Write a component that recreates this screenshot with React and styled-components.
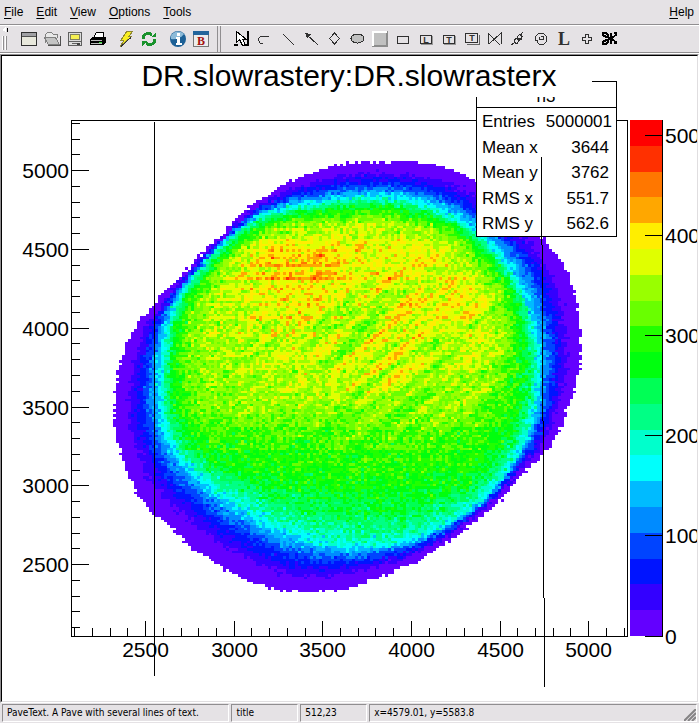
import React from "react";
import styled, { createGlobalStyle } from "styled-components";

const GlobalStyle = createGlobalStyle`
  body {
    margin: 0;
    background: #e5e2e5;
    color: #000;
    font-family: "Liberation Sans", Arial, sans-serif;
  }
`;

const Window = styled.div`
  display: flex;
  flex-direction: column;
`;

const MenuBar = styled.nav`
  display: flex;
  align-items: center;
  gap: 13px;
  height: 24px;
  padding: 0 5px 0 4px;
  border-bottom: 1px solid #908e90;
`;

const MenuButton = styled.button`
  padding: 0;
  border: 0;
  background: none;
  color: inherit;
  font: 12px/16px "Liberation Sans", Arial, sans-serif;
  margin-left: ${({ $end }) => ($end ? "auto" : "0")};
`;

const Underlined = styled.span`
  text-decoration: underline;
  text-underline-offset: 2px;
`;

const ToolBar = styled.div`
  display: flex;
  align-items: center;
  height: 26px;
  padding-left: 2px;
  border-top: 1px solid #fff;
  border-bottom: 1px solid #908e90;
  box-shadow: 0 1px 0 #fff;
  margin-bottom: 1px;
`;

const ToolGroup = styled.div`
  display: flex;
  margin-right: ${({ $gap }) => $gap || 0}px;
`;

const ToolButton = styled.button`
  display: flex;
  align-items: center;
  justify-content: center;
  width: 23px;
  height: 24px;
  padding: 0;
  border: 0;
  background: none;
`;

const Grip = styled.svg`
  width: 15px;
  height: 24px;
`;

const Divider = styled.div`
  width: 2px;
  height: 26px;
  border-left: 1px solid #908e90;
  border-right: 1px solid #908e90;
  margin-right: 9px;
`;

const CanvasFrame = styled.main`
  border: 1px solid;
  border-color: #908e90 #fff #fff #908e90;
`;

const Canvas = styled.div`
  border: 1px solid;
  border-color: #000 #e0dee0 #e0dee0 #000;
  background: #fff;
`;

const Plot = styled.svg`
  display: block;
  width: 100%;
  height: auto;
  font-family: "Liberation Sans", Arial, sans-serif;
`;

const StatusBar = styled.footer`
  display: grid;
  grid-template-columns: 34fr 10fr 10fr 49fr;
  gap: 2px;
  padding: 1px 2px;
`;

const StatusPane = styled.div`
  display: flex;
  align-items: center;
  justify-content: space-between;
  height: 16px;
  padding-left: 4px;
  border: 1px solid;
  border-color: #908e90 #fff #fff #908e90;
  font: 10px/16px "DejaVu Sans Condensed", "DejaVu Sans", sans-serif;
  white-space: nowrap;
`;

const SizeGrip = styled.svg`
  width: 12px;
  height: 12px;
  align-self: flex-end;
`;

/* ---------- toolbar icons, all on an 18x18 grid ---------- */

const ink = "#303030";

const icons = {
  "New canvas": (
    <g>
      <path d="M1.5 2.5h15v13h-15z" fill="#e8e8dc" stroke={ink} />
      <path d="M2 3h14v3H2z" fill="#a0a0a4" />
      <path d="M2 6.5h14" stroke="#505050" />
    </g>
  ),
  Open: (
    <g>
      <path d="M2.5 12.5V4.5l2-2h4l2 2h4v3" fill="#e8e8e8" stroke="#808080" />
      <path d="M1.5 7.5h11l4 7h-11z" fill="#c4c4c4" stroke="#808080" />
      <path d="M5 15.5h12V6" fill="none" stroke="#505050" />
    </g>
  ),
  Save: (
    <g>
      <path d="M2.5 2.5h13v13h-13z" fill="#dcdcdc" stroke="#606060" />
      <path d="M4.500 4.500h9v5h-9z" fill="#f6f052" stroke="#808060" />
      <path d="M3 11.500h12M6 13.500h5" stroke="#606060" />
      <path d="M11 13h3v2h-3z" fill="#404040" />
    </g>
  ),
  Print: (
    <g>
      <path d="M5.500 8V5.500l2-3h7V8z" fill="#fff" stroke="#000" />
      <path d="M1 9l3-2h13v5l-3 3H1z" fill="#000" />
      <path d="M2 10h11v1H2zM2 13h11v1H2z" fill="#b8b8b8" />
      <path d="M10 12h3v1h-3z" fill="#33dd33" />
    </g>
  ),
  Interrupt: (
    <g>
      <path d="M10 1h6l-4 5h3L3 17l4-7H4z" fill="#f8ee20" stroke="#8f8832" />
      <path d="M14 7.500L4 16.500" stroke="#333" />
    </g>
  ),
  Refresh: (
    <g fill="none" stroke="#19922c" strokeWidth="3">
      <path d="M3 9C3 4 8 2 12 5" />
      <path d="M15 9c0 5-5 7-9 4" />
      <path d="M11 7h5V2zM7 11H2v5z" fill="#19922c" stroke="none" />
    </g>
  ),
  Inspect: (
    <g shapeRendering="auto">
      <circle cx="9" cy="9" r="8" fill="#1d6096" />
      <path d="M2 6a8 8 0 0 1 13-2c-3 4-8 6-13 5z" fill="#8dbbd9" />
      <path d="M8 3h3v3H8zM7 7h4v6h2v2H7v-2h1V9H7z" fill="#fff" />
    </g>
  ),
  Browser: (
    <g>
      <path d="M1.500 1.500h15v15h-15z" fill="#ededed" stroke="#777" />
      <path d="M1 1h16v4H1z" fill="#24659b" />
      <text x="9" y="15" fontSize="12" fontWeight="bold" textAnchor="middle" fill="#a31212"
        fontFamily="Liberation Serif, serif">B</text>
    </g>
  ),
  Pointer: (
    <g>
      <path d="M1 15h4M10 15h5V1" fill="none" stroke="#000" strokeWidth="2" />
      <path d="M3.500 1.500v11l3-3 3 6 3-1-3-5h4z" fill="#fff" stroke="#000" />
    </g>
  ),
  Arc: <path d="M7 13.500H4.500l-2-3v-2l3-2.500h5l2 1" fill="none" stroke={ink} />,
  Line: <path d="M4 4l11 11" stroke={ink} />,
  Arrow: (
    <g>
      <path d="M4 4l12 11" stroke={ink} />
      <path d="M3 3l6 1-4 4z" fill={ink} />
    </g>
  ),
  Diamond: <path d="M9.500 3l5 5.500-5 5.500-5-5.500z" fill="#e5e2e5" stroke={ink} />,
  Ellipse: <ellipse cx="9.500" cy="8.500" rx="6.500" ry="4.500" fill="#c0c0c0" stroke={ink} />,
  Pad: (
    <g>
      <path d="M1 1h16v16H1z" fill="#8c8c8c" />
      <path d="M1 1h15v2H3v13H1z" fill="#fff" />
      <path d="M3 3h12v12H3z" fill="#c0c0c0" />
    </g>
  ),
  Pave: <path d="M3.500 6.500h11v7h-11z" fill="none" stroke={ink} />,
  "Pave label": (
    <g>
      <path d="M4 14.500h11.500V6" fill="none" stroke="#999" />
      <path d="M3.500 5.500h11v8h-11z" fill="none" stroke={ink} />
      <text x="9" y="13" fontSize="9" fontWeight="bold" textAnchor="middle" fill={ink}>L</text>
    </g>
  ),
  "Pave text": (
    <g>
      <path d="M4 14.500h11.500V6" fill="none" stroke="#999" />
      <path d="M3.500 5.500h11v8h-11z" fill="none" stroke={ink} />
      <text x="9" y="13" fontSize="9" fontWeight="bold" textAnchor="middle" fill={ink}>T</text>
    </g>
  ),
  "Paves text": (
    <g>
      <path d="M4 14.500h12.500V5M14.500 4v8.500H5" fill="none" stroke="#666" />
      <path d="M2.500 3.500h12v9h-12z" fill="#e5e2e5" stroke={ink} />
      <text x="9" y="11" fontSize="9" fontWeight="bold" textAnchor="middle" fill={ink}>T</text>
    </g>
  ),
  Graph: <path d="M2.500 14V3.500L14 15M15.500 2v12M15 3L3 14" fill="none" stroke={ink} />,
  "Curly line": (
    <path d="M2 15l3-2V9.500l3-1 2 2-2 3-3-1M8 10V6.500l3-2 2 2-1 3-3-1M11 6l3-4M10 10l3-2" fill="none" stroke={ink} />
  ),
  "Curly arc": (
    <path d="M3.500 9.500V6.500l3-3h5l3 3v5l-3 3h-4l-2-2v-2h-3M8.500 6.500h3v3h-4v-3" fill="none" stroke={ink} />
  ),
  Latex: (
    <text x="9" y="15" fontSize="18" fontWeight="bold" textAnchor="middle" fill={ink}
      fontFamily="Liberation Serif, serif">L</text>
  ),
  Marker: <path d="M7.500 4.500h3v3h3v3h-3v3h-3v-3h-3v-3h3z" fill="none" stroke={ink} />,
  "Cutting pad": (
    <g fill="none" stroke="#000" strokeWidth="2">
      <path d="M2 3h3l2 2v2L5 7 2 5zM2 14h3l2-2v-2l-2 0-3 2z" />
      <path d="M6 7l3 1h2l5-4M6 10l3-1h2l5 4M10 3v4M10 10v4M13 3h3M13 13h3" />
    </g>
  ),
};

const toolGroups = [
  { gap: 5, tools: ["New canvas", "Open", "Save", "Print"] },
  { gap: 6, tools: ["Interrupt", "Refresh"] },
  { gap: 5, tools: ["Inspect", "Browser"] },
];

const drawTools = [
  "Pointer", "Arc", "Line", "Arrow", "Diamond", "Ellipse", "Pad", "Pave", "Pave label",
  "Pave text", "Paves text", "Graph", "Curly line", "Curly arc", "Latex", "Marker", "Cutting pad",
];

function Tool({ name }) {
  return (
    <ToolButton type="button" aria-label={name}>
      <svg width="18" height="18" viewBox="0 0 18 18" shapeRendering="crispEdges" aria-hidden="true">
        {icons[name]}
      </svg>
    </ToolButton>
  );
}

/* ---------- histogram ---------- */

const BINS_X = 186;
const BINS_Y = 200;
const LEVELS = 20;
const frame = { left: 71, top: 120, right: 627, bottom: 636 };
const center = [350, 378];

// outer edge of the distribution
const outerEdge = [
  [370, 162], [400, 162], [425, 164], [455, 170], [476, 181], [510, 205], [545, 240], [562, 262],
  [574, 290], [581, 335], [578, 380], [568, 410], [556, 438], [545, 452], [520, 477], [490, 509],
  [465, 529], [440, 547], [410, 564], [380, 577], [350, 587], [320, 592], [290, 592], [260, 585],
  [238, 576], [215, 562], [190, 547], [170, 528], [154, 514], [140, 498], [130, 480], [122, 455],
  [115, 430], [114, 405], [118, 375], [126, 345], [140, 322], [155, 304], [170, 286], [185, 272],
  [200, 254], [220, 237], [245, 211], [265, 197], [285, 183], [310, 174], [340, 165],
];

// cyan ridge, where the counts start to level off
const innerEdge = [
  [375, 197], [400, 199], [433, 208], [455, 217], [477, 233], [495, 251], [511, 270], [525, 296],
  [532, 322], [537, 348], [538, 377], [536, 400], [531, 422], [520, 449], [507, 472], [489, 493],
  [467, 511], [450, 522], [432, 532], [410, 540], [380, 545], [345, 545], [310, 540], [280, 529],
  [250, 512], [222, 495], [198, 476], [180, 456], [168, 436], [161, 405], [161, 378], [163, 350],
  [167, 328], [173, 307], [182, 291], [196, 273], [211, 256], [226, 242], [241, 229], [256, 218],
  [280, 209], [310, 204], [345, 199],
];

function radialProfile(points) {
  const steps = 720;
  const polar = points
    .map(([x, y]) => [
      Math.atan2(y - center[1], x - center[0]),
      Math.hypot(x - center[0], y - center[1]),
    ])
    .sort((a, b) => a[0] - b[0]);
  const last = polar[polar.length - 1];
  const ring = [[last[0] - 2 * Math.PI, last[1]], ...polar, [polar[0][0] + 2 * Math.PI, polar[0][1]]];
  const table = [];
  for (let i = 0; i <= steps; i++) {
    const angle = -Math.PI + (i / steps) * 2 * Math.PI;
    let k = 1;
    while (k < ring.length - 1 && ring[k][0] < angle) k++;
    const [a0, r0] = ring[k - 1];
    const [a1, r1] = ring[k];
    table.push(r0 + ((r1 - r0) * (angle - a0)) / (a1 - a0));
  }
  return (angle) => table[Math.round(((angle + Math.PI) / (2 * Math.PI)) * steps)];
}

function hash(x, y) {
  let h = Math.imul(x, 374761393) + Math.imul(y, 668265263);
  h = Math.imul(h ^ (h >>> 13), 1274126177);
  return ((h ^ (h >>> 16)) >>> 0) / 4294967296;
}

function smoothNoise(x, y) {
  const ix = Math.floor(x);
  const iy = Math.floor(y);
  const fx = x - ix;
  const fy = y - iy;
  const top = hash(ix, iy) * (1 - fx) + hash(ix + 1, iy) * fx;
  const low = hash(ix, iy + 1) * (1 - fx) + hash(ix + 1, iy + 1) * fx;
  return top * (1 - fy) + low * fy - 0.5;
}

const bump = (x, y, cx, cy, rx, ry) => Math.exp(-(((x - cx) / rx) ** 2) - ((y - cy) / ry) ** 2);

// mean level on the plateau, from the top of the pad downwards
const plateau = [[200, 13.8], [235, 14.8], [290, 14.8], [340, 14], [400, 13], [450, 11.7], [500, 10.5], [545, 9.2]];

function plateauLevel(x, y) {
  let k = 1;
  while (k < plateau.length - 1 && plateau[k][0] < y) k++;
  const [y0, v0] = plateau[k - 1];
  const [y1, v1] = plateau[k];
  const base = v0 + ((v1 - v0) * (y - y0)) / (y1 - y0);
  return base + bump(x, y, 280, 262, 75, 30) * 1.1 + bump(x, y, 420, 340, 80, 60) * 0.4
    - bump(x, y, 525, 320, 40, 100) * 1.4 - bump(x, y, 240, 500, 60, 40) * 1;
}

function binLevels() {
  const outer = radialProfile(outerEdge);
  const inner = radialProfile(innerEdge);
  const rows = [];
  for (let j = 0; j < BINS_Y; j++) {
    const row = [];
    for (let i = 0; i < BINS_X; i++) {
      const x = frame.left + ((i + 0.5) * (frame.right - frame.left)) / BINS_X;
      const y = frame.top + ((j + 0.5) * (frame.bottom - frame.top)) / BINS_Y;
      const angle = Math.atan2(y - center[1], x - center[0]);
      const r = Math.hypot(x - center[0], y - center[1]);
      const gauss = hash(i, j) + hash(i + 500, j) + hash(i, j + 500) - 1.5;
      const rOut = outer(angle);
      const rIn = inner(angle);
      const t = (rOut - r + gauss * 2) / (rOut - rIn);
      let level = -1;
      if (t > 0 && t <= 1) {
        level = 6.6 * t ** 1.7 + gauss * 0.8 * t;
        level = Math.max(0, level);
      } else if (t > 1) {
        const depth = rIn - r;
        const rise = 1 - Math.exp(-Math.max(0, depth) / 14);
        // streaks run up and to the right
        const along = (x * 0.79 - y * 0.61) / 45;
        const across = (x * 0.61 + y * 0.79) / 5;
        const streak = smoothNoise(along, across) * 5 * bump(x, y, 390, 345, 160, 95);
        const stripes = (hash(7, j) - 0.5) * 2 * bump(x, y, 280, 275, 90, 60);
        const comb = (hash(7, j) - 0.5 + (hash(i, 11) - 0.5) * 0.7) * 0.7;
        level = 6.6 + (plateauLevel(x, y) - 6.6) * rise + (streak + stripes + comb) * rise + gauss * 1.5;
        level = Math.max(5, level);
      }
      row.push(level < 0 ? -1 : Math.min(LEVELS - 1, Math.floor(level)));
    }
    rows.push(row);
  }
  return rows;
}

function levelPaths(rows) {
  const paths = Array.from({ length: LEVELS }, () => "");
  const edgeX = (i) => Math.round(frame.left + (i * (frame.right - frame.left)) / BINS_X);
  const edgeY = (j) => Math.round(frame.top + (j * (frame.bottom - frame.top)) / BINS_Y);
  rows.forEach((row, j) => {
    const y0 = edgeY(j);
    const h = edgeY(j + 1) - y0;
    let start = 0;
    for (let i = 1; i <= BINS_X; i++) {
      if (i === BINS_X || row[i] !== row[start]) {
        if (row[start] >= 0) {
          const x0 = edgeX(start);
          const w = edgeX(i) - x0;
          paths[row[start]] += `M${x0} ${y0}h${w}v${h}h${-w}z`;
        }
        start = i;
      }
    }
  });
  return paths;
}

const levelColor = (level) => `hsl(${280 - (Math.floor((level + 0.99) * 2.5) + 1) * 5.6} 100% 50%)`;

const histogram = levelPaths(binLevels());

const toX = (value) => Math.floor(145.6 + ((value - 2500) * 88.6) / 500) + 0.5;
const toY = (value) => Math.floor(564.6 - ((value - 2500) * 78.8) / 500) + 0.5;

const minorTicks = [];
for (let v = 2100; v <= 5300; v += 100) minorTicks.push(v);
const majorTicks = [2500, 3000, 3500, 4000, 4500, 5000];

const scaleTicks = [0, 100, 200, 300, 400, 500];

const stats = [
  { label: "Entries", value: "5000001", y: 127 },
  { label: "Mean x", value: "3644", y: 153 },
  { label: "Mean y", value: "3762", y: 178 },
  { label: "RMS x", value: "551.7", y: 204 },
  { label: "RMS y", value: "562.6", y: 229 },
];

function Axes() {
  return (
    <g>
      <g fill="none" stroke="#000" shapeRendering="crispEdges">
        <path d="M71.500 120.500h556v516h-556z" />
        {minorTicks.map((v) => (
          <React.Fragment key={v}>
            {v < 5300 && <path d={`M${toX(v)} 636v${v % 500 ? -8 : -15}`} />}
            <path d={`M71 ${toY(v)}h${v % 500 ? 9 : 18}`} />
          </React.Fragment>
        ))}
      </g>
      <g fontSize="21">
        {majorTicks.map((v) => (
          <React.Fragment key={v}>
            <text x={toX(v)} y="657" textAnchor="middle">{v}</text>
            <text x="69" y={toY(v) + 7.5} textAnchor="end">{v}</text>
          </React.Fragment>
        ))}
      </g>
    </g>
  );
}

function ColorScale() {
  return (
    <g>
      <g shapeRendering="crispEdges">
        {histogram.map((_, level) => {
          const top = Math.round(636 - (level + 1) * 25.8);
          const bottom = Math.round(636 - level * 25.8);
          return <rect key={level} x="630" y={top} width="32" height={bottom - top} fill={levelColor(level)} />;
        })}
        <path d="M662.500 120v517" stroke="#000" />
        {scaleTicks.map((v) => (
          <path key={v} d={`M645 ${Math.floor(636 - v * 1.002) + 0.5}h17`} stroke="#000" />
        ))}
      </g>
      <g fontSize="21">
        {scaleTicks.map((v) => (
          <text key={v} x="665" y={Math.floor(636 - v * 1.002) + 8}>{v}</text>
        ))}
      </g>
    </g>
  );
}

function StatsBox() {
  return (
    <g>
      <path d="M476.500 81.500h140v155h-140zM476 107.500h140" fill="#fff" stroke="#000" shapeRendering="crispEdges" />
      <g fontSize="17">
        <text x="546" y="102" textAnchor="middle">h3</text>
        {stats.map(({ label, value, y }) => (
          <React.Fragment key={label}>
            <text x="482" y={y}>{label}</text>
            <text x={value.length > 5 ? 612 : 609} y={y} textAnchor="end">{value}</text>
          </React.Fragment>
        ))}
      </g>
    </g>
  );
}

function HistogramPlot() {
  return (
    <Plot viewBox="2 56 695 645" role="img" aria-label="DR.slowrastery:DR.slowrasterx">
      <g shapeRendering="crispEdges">
        {histogram.map((d, level) => (
          <path key={level} d={d} fill={levelColor(level)} />
        ))}
      </g>
      <Axes />
      <ColorScale />
      <StatsBox />
      <path
        d="M154.500 122v554M541.500 157v88M542.500 245v176M543.500 421v177M544.500 598v89"
        stroke="#000"
        shapeRendering="crispEdges"
      />
      <rect x="110" y="58" width="482" height="39" fill="#fff" />
      <text x="349" y="86" fontSize="30" textAnchor="middle">DR.slowrastery:DR.slowrasterx</text>
    </Plot>
  );
}

function Menu({ label, end }) {
  return (
    <MenuButton type="button" $end={end}>
      <Underlined>{label[0]}</Underlined>
      {label.slice(1)}
    </MenuButton>
  );
}

export default function App() {
  return (
    <Window>
      <GlobalStyle />
      <MenuBar>
        {["File", "Edit", "View", "Options", "Tools"].map((label) => (
          <Menu key={label} label={label} />
        ))}
        <Menu label="Help" end />
      </MenuBar>

      <ToolBar role="toolbar">
        <Grip viewBox="0 0 15 24" shapeRendering="crispEdges" aria-hidden="true">
          <path d="M0 3l4-3v5z" fill="#fff" />
          <path d="M5.500 1v4" stroke="#000" />
          <path d="M.5 9v14M3.500 9v14" stroke="#fff" />
          <path d="M1.500 9v14M4.500 9v14" stroke="#908e90" />
        </Grip>
        {toolGroups.map(({ gap, tools }) => (
          <ToolGroup key={tools[0]} $gap={gap}>
            {tools.map((name) => (
              <Tool key={name} name={name} />
            ))}
          </ToolGroup>
        ))}
        <Divider />
        <ToolGroup>
          {drawTools.map((name) => (
            <Tool key={name} name={name} />
          ))}
        </ToolGroup>
      </ToolBar>

      <CanvasFrame>
        <Canvas>
          <HistogramPlot />
        </Canvas>
      </CanvasFrame>

      <StatusBar>
        <StatusPane>PaveText. A Pave with several lines of text.</StatusPane>
        <StatusPane>title</StatusPane>
        <StatusPane>512,23</StatusPane>
        <StatusPane>
          x=4579.01, y=5583.8
          <SizeGrip viewBox="0 0 12 12" aria-hidden="true">
            <path d="M0 12L12 0M4 12l8-8M8 12l4-4" stroke="#858385" strokeWidth="2" />
          </SizeGrip>
        </StatusPane>
      </StatusBar>
    </Window>
  );
}
